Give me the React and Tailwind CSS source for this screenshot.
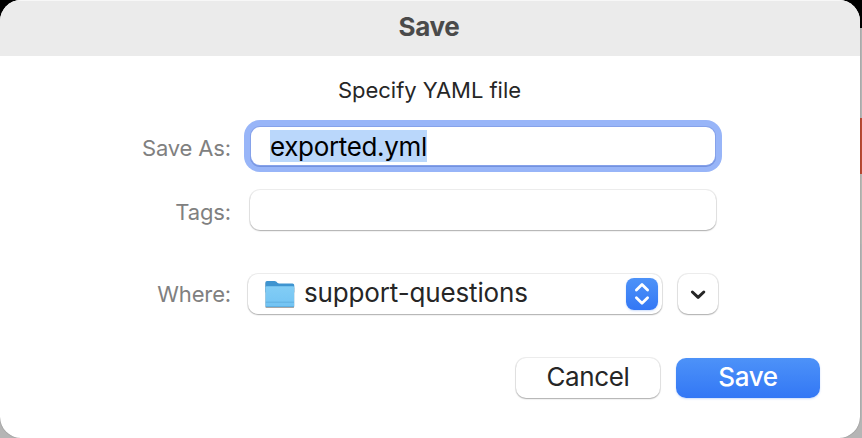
import React from "react";

const control =
  "rounded-[10px] bg-white shadow-[0_0_0_1px_rgba(0,0,0,0.07),0_1px_1.5px_rgba(0,0,0,0.28)]";

function Label({ children }) {
  return (
    <div className="w-[231px] shrink-0 text-right text-[22px] leading-[28px] tracking-[-0.15px] text-[#808080]">
      {children}
    </div>
  );
}

function FolderIcon() {
  return (
    <svg width="32" height="32" viewBox="0 0 32 32" className="shrink-0 drop-shadow-[0_1px_0.5px_rgba(0,0,0,0.35)]">
      <defs>
        <linearGradient id="folder" x1="0" y1="0" x2="0" y2="1">
          <stop offset="0" stopColor="#82cdf5" />
          <stop offset="1" stopColor="#72c3f3" />
        </linearGradient>
      </defs>
      <path d="M1.4 4.5Q1.4 3 2.9 3H10.3Q11.6 3 12.5 3.8L13.3 4.7Q14 5.4 15.3 5.4H28.5Q30.2 5.4 30.2 7.1V14H1.4Z" fill="#3e94d0" />
      <path d="M1.4 9.5Q1.4 8.3 2.7 8.3H29Q30.2 8.3 30.2 9.5V27.6Q30.2 29 28.8 29H2.9Q1.4 29 1.4 27.5Z" fill="url(#folder)" />
      <path d="M1.8 24.2H30M1.8 28.5H30" stroke="#59a9dc" strokeWidth="0.8" />
    </svg>
  );
}

export default function App() {
  return (
    <div className="h-[438px] w-[862px] overflow-hidden bg-[linear-gradient(to_bottom,#000_0_28px,#b4b4b4_28px_118px,#b94a33_118px_174px,#b8b8b4_174px_244px,#b5b5b5_244px)] font-['Inter','Liberation_Sans',sans-serif]">
      <div className="flex h-[438px] w-[860px] flex-col overflow-hidden rounded-[21px] bg-white shadow-[0_0_1px_rgba(0,0,0,0.5)]">
        <header className="flex h-14 shrink-0 items-center justify-center border-t border-[#f7f7f7] bg-[#ebebeb] pr-[2px] text-[26px] font-bold tracking-[-0.35px] text-[#4a4a4a]">
          <span className="-mt-[5px]">Save</span>
        </header>

        <p className="mt-[20px] h-7 shrink-0 pr-px text-center text-[22px] leading-[28px] tracking-[-0.04px] text-[#262626]">
          Specify YAML file
        </p>

        <div className="mt-[23px] flex h-[38px] shrink-0 items-center">
          <Label><span className="relative top-[2px]">Save As:</span></Label>
          <div className="ml-[20px] flex h-[38px] w-[464px] items-center rounded-[9px] bg-white pl-[19px] text-[26px] tracking-[-0.34px] text-black shadow-[0_0_0_1px_#86a2ea,0_1px_0_1px_#7492df,0_0_0_7px_#98b5f8]">
            <span className="h-8 bg-[#bad7fb] leading-[33px]">exported.yml</span>
          </div>
        </div>

        <div className="mt-[25px] flex h-[40px] shrink-0 items-center">
          <Label><span className="relative top-[2px]">Tags:</span></Label>
          <div className={`${control} ml-[19px] h-[40px] w-[466px]`} />
        </div>

        <div className="mt-[44px] flex h-[40px] shrink-0 items-center">
          <Label>Where:</Label>
          <div className={`${control} ml-[17px] flex h-[40px] w-[414px] items-center pl-[16px] pr-[4px]`}>
            <FolderIcon />
            <span className="-mt-[2px] ml-[8px] flex-1 text-[26px] leading-[38px] tracking-[-0.15px] text-[#262626]">support-questions</span>
            <span className="flex size-8 items-center justify-center rounded-[8px] bg-gradient-to-b from-[#4d92f8] to-[#3377f5] shadow-[0_1px_2px_rgba(51,119,245,0.25)]">
              <svg width="32" height="32" viewBox="0 0 32 32" fill="none" stroke="white" strokeWidth="2.8" strokeLinecap="round" strokeLinejoin="round">
                <path d="M10.4 12.1L16 6.6L21.6 12.1M10.4 19.7L16 25.2L21.6 19.7" />
              </svg>
            </span>
          </div>
          <div className={`${control} ml-[16px] flex size-[40px] items-center justify-center`}>
            <svg width="40" height="40" viewBox="0 0 40 40" fill="none" stroke="#262626" strokeWidth="3" strokeLinecap="round" strokeLinejoin="round">
              <path d="M14.4 18L20.1 23.4L25.8 18" />
            </svg>
          </div>
        </div>

        <div className="mt-[44px] flex shrink-0 justify-end gap-4 pr-[40px] text-[26px] leading-9 tracking-[-0.35px]">
          <button className={`${control} h-10 w-[144px] pb-[3px] text-[#262626]`}>Cancel</button>
          <button className="h-10 w-[144px] rounded-[10px] bg-gradient-to-b from-[#4d92f8] to-[#3377f5] pb-[3px] font-medium text-white shadow-[0_1px_2px_rgba(51,119,245,0.25)]">
            Save
          </button>
        </div>
      </div>
    </div>
  );
}
